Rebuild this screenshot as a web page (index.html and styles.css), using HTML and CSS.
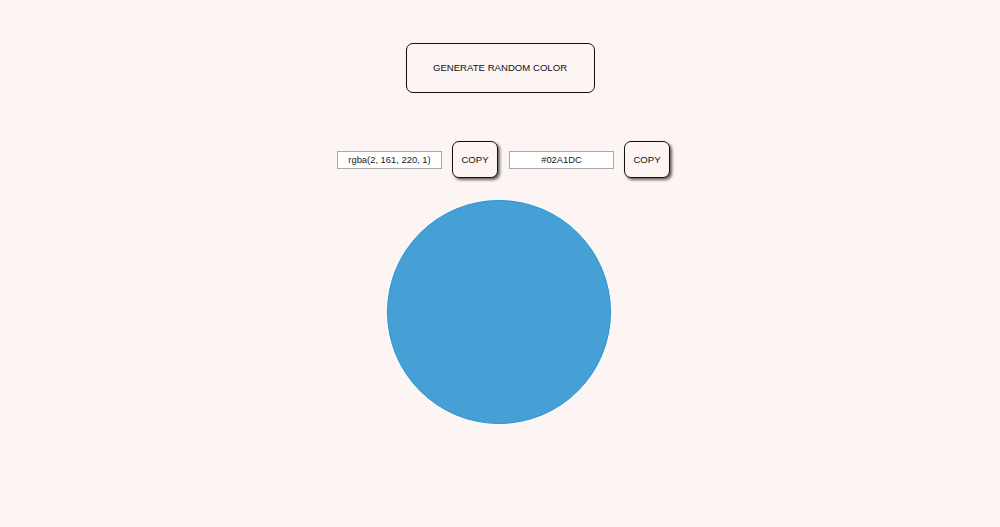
FILE: index.html
```html
<!DOCTYPE html>
<html>
<head>
<meta charset="utf-8">
<link rel="stylesheet" href="styles.css">
</head>
<body>
<main class="page">
  <button class="generate">GENERATE RANDOM COLOR</button>
  <div class="codes">
    <input class="code" type="text" value="rgba(2, 161, 220, 1)" readonly>
    <button class="copy">COPY</button>
    <input class="code hex" type="text" value="#02A1DC" readonly>
    <button class="copy">COPY</button>
  </div>
  <div class="swatch"></div>
</main>
</body>
</html>
```
FILE: styles.css
```css
html, body {
  margin: 0;
  padding: 0;
  background: #fdf4f4;
  font-family: "Liberation Sans", Arial, sans-serif;
}
.page {
  display: flex;
  flex-direction: column;
  align-items: center;
  padding-top: 43px;
}
.generate {
  width: 189px;
  height: 50px;
  border: 1.5px solid #111;
  border-radius: 7px;
  background: #fdf4f4;
  font-family: "Liberation Sans", Arial, sans-serif;
  font-size: 9.6px;
  color: #111;
  padding: 0 0 2px 0;
}
.codes {
  display: flex;
  align-items: center;
  margin-top: 48px;
  margin-left: 7px;
}
.code {
  width: 105px;
  height: 18px;
  box-sizing: border-box;
  border: 1px solid #a8a8a8;
  background: #fff;
  font-family: "Liberation Sans", Arial, sans-serif;
  font-size: 9.4px;
  color: #1a1a1a;
  -webkit-text-fill-color: #1a1a1a;
  text-align: center;
  padding: 0;
  outline: none;
}
.copy {
  width: 46px;
  height: 37px;
  margin: 0 11px 0 10px;
  border: 1.8px solid #111;
  border-radius: 7px;
  background: #fdf4f4;
  box-shadow: 2px 2px 3px rgba(0,0,0,0.6);
  font-family: "Liberation Sans", Arial, sans-serif;
  font-size: 9.6px;
  color: #111;
  padding: 0 0 1px 0;
}
.copy:last-child {
  margin-right: 0;
}
.swatch {
  width: 224px;
  height: 224px;
  box-sizing: border-box;
  margin-top: 22px;
  margin-right: 2px;
  border-radius: 50%;
  background: #46a0d6;
  border: 1px solid #1f96d6;
}
```
